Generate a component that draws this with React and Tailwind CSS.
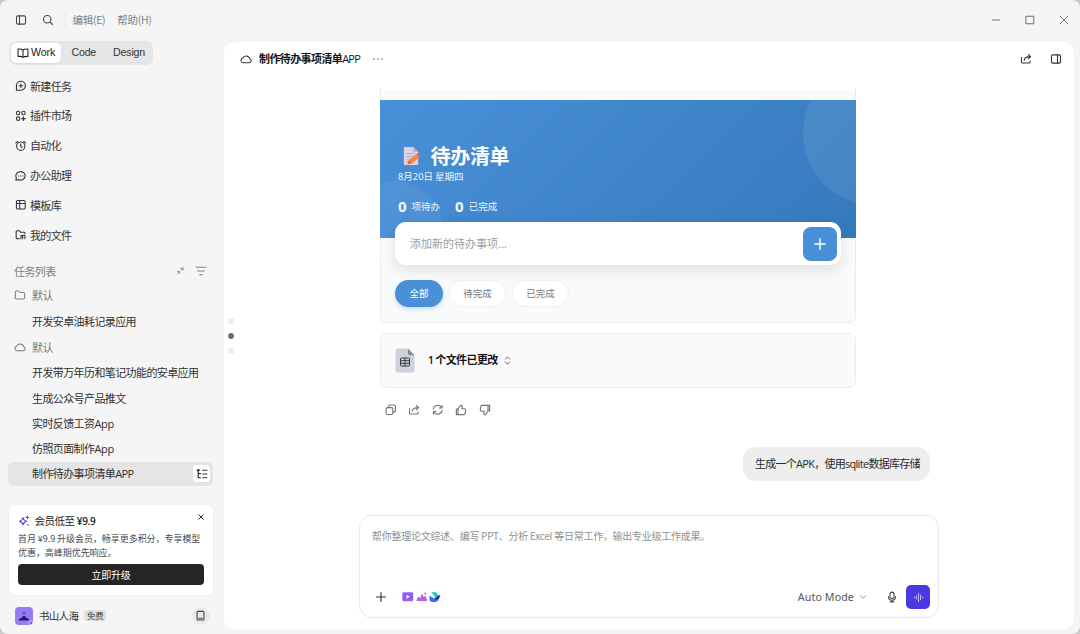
import React from "react";

function Icon({ children, className = "size-3", sw = 1.5, vb = "0 0 16 16" }) {
  return (
    <svg viewBox={vb} className={`shrink-0 ${className}`} fill="none" stroke="currentColor" strokeWidth={sw} strokeLinecap="round" strokeLinejoin="round">
      {children}
    </svg>
  );
}

const Cloud = ({ className }) => (
  <Icon className={className} sw={1.4}>
    <path d="M4.2 13h7.9a2.8 2.8 0 0 0 1-5.4A5.2 5.2 0 0 0 3.4 6.9 3.15 3.15 0 0 0 4.2 13Z" />
  </Icon>
);
const Share = ({ className }) => (
  <Icon className={className} sw={1.4}>
    <path d="M2 6v5.5A1.8 1.8 0 0 0 3.8 13.3h8.4a1.3 1.3 0 0 0 1.3-1.3v-1.2M5.6 9.8c.2-3.6 2.2-5 8.4-5M11.2 2l3 2.8-3 2.8" />
  </Icon>
);

const nav = [
  { label: "新建任务", icon: <path d="M2 14.2V8a6.2 6.2 0 1 1 6.2 6.2ZM8.2 5.5v5M5.7 8h5" /> },
  {
    label: "插件市场",
    icon: (
      <>
        <circle cx="4.3" cy="4.2" r="2.4" />
        <circle cx="11.8" cy="4.2" r="2.4" />
        <circle cx="4.3" cy="12" r="2.4" />
        <path d="M11.8 9.4v5.2M9.2 12h5.2" />
      </>
    ),
  },
  {
    label: "自动化",
    icon: (
      <>
        <circle cx="8" cy="8.6" r="5.8" />
        <path d="M8 5.5v3.4l1.9 1.5M1.2 4 3.7 1.8M14.8 4l-2.5-2.2" />
      </>
    ),
  },
  { label: "办公助理", icon: <path d="M1.2 14.200 2 11A6.500 5.900 0 1 1 4.500 13.300ZM5 8.200h.1M8 8.200h.1M11 8.200h.1" /> },
  { label: "模板库", icon: <path d="M4 2h8.2a2 2 0 0 1 2 2v8a2 2 0 0 1-2 2H4a2 2 0 0 1-2-2V4a2 2 0 0 1 2-2ZM2 6.2h12.2M6.5 2v12" /> },
  { label: "我的文件", icon: <path d="M6 13.5H3.2A1.6 1.6 0 0 1 1.6 12V4a1.5 1.5 0 0 1 1.5-1.5h3L7.8 4.6h4.6A1.5 1.5 0 0 1 14 6.1M8.3 13.5V9.2h2.4v4.3M13.8 13.5V8.6h-3.1" /> },
];

function Group({ icon, className }) {
  return (
    <div className={`flex items-center pl-[14px] text-[#777] ${className}`}>
      {icon}
      <span className="ml-[6px]">默认</span>
    </div>
  );
}

function Sidebar() {
  return (
    <aside className="flex w-[224px] shrink-0 flex-col">
      <div className="ml-[9px] flex h-6 w-[144px] items-center rounded-[7px] bg-[#e6e6e6] font-['Liberation_Sans'] text-[10.6px] text-[#333]">
        <div className="ml-[2px] flex h-5 w-[50px] items-center rounded-[5px] bg-white pl-[6px] text-[#222] shadow-xs">
          <Icon className="size-[12px]" sw={1.4}>
            <path d="M8 4.2v9.6M8 4.2C7 3 5 2.6 1.4 2.7v9.8C5 12.4 7 12.7 8 13.8c1-1.1 3-1.4 6.6-1.3V2.7C11 2.6 9 3 8 4.2Z" />
          </Icon>
          <span className="ml-[2px] tracking-[-0.100px]">Work</span>
        </div>
        <span className="ml-[10.500px] tracking-[-0.200px]">Code</span>
        <span className="ml-[17px] tracking-[-0.150px]">Design</span>
      </div>

      <nav className="mt-[6px] text-[11px] tracking-[-0.65px] text-[#333]">
        {nav.map((n) => (
          <div key={n.label} className="flex h-[29.8px] items-center pl-[14.5px]">
            <Icon className="size-[11.5px]" sw={1.5}>{n.icon}</Icon>
            <span className="ml-[4px]">{n.label}</span>
          </div>
        ))}
      </nav>

      <div className="mt-[9px] text-[11px] tracking-[-0.6px] text-[#303030]">
        <div className="flex h-6 items-center pl-[14px] text-[#7c7c7c]">
          <span className="w-[162px]">任务列表</span>
          <Icon className="size-[9px]" sw={1.4}>
            <path d="M14 2 9.8 6.2M9.5 2.5v4h4M2 14l4.2-4.2M2.5 9.5h4v4" />
          </Icon>
          <Icon className="ml-[10px] size-[12px]" sw={1.3}>
            <path d="M1.5 3h13M3.5 8h9M6.2 13h3.6" />
          </Icon>
        </div>
        <Group className="h-[25px]" icon={<Icon className="size-[12px]" sw={1.3}><path d="M1.8 12V4a1.3 1.3 0 0 1 1.3-1.3h3L7.6 4.5h5.3a1.3 1.3 0 0 1 1.3 1.3V12a1.3 1.3 0 0 1-1.3 1.3H3.1A1.3 1.3 0 0 1 1.8 12Z" /></Icon>} />
        <div className="flex h-[26px] items-center pl-8">开发安卓油耗记录应用</div>
        <Group className="h-[26px]" icon={<Cloud className="size-[12px]" />} />
        <div className="flex h-[25px] items-center pl-8">开发带万年历和笔记功能的安卓应用</div>
        <div className="flex h-[26px] items-center pl-8">生成公众号产品推文</div>
        <div className="flex h-[25px] items-center pl-8"><span>实时反馈工资<span className="font-['Open_Sans'] tracking-[-0.300px]">App</span></span></div>
        <div className="flex h-[26px] items-center pl-8"><span>仿照页面制作<span className="font-['Open_Sans'] tracking-[-0.300px]">App</span></span></div>
        <div className="ml-[8px] flex h-[24px] w-[205px] items-center rounded-[6px] bg-[#e5e5e5] pb-px pl-6 pr-[3px]">
          <span>制作待办事项清单<span className="font-['Open_Sans'] tracking-[-0.700px]">APP</span></span>
          <span className="ml-auto mt-px flex size-[17px] items-center justify-center rounded-[4px] bg-white">
            <Icon className="size-[12px]" sw={1.6}>
              <path d="M3 2v11h3M1.5 3.2 3 1.8l1.5 1.4M3 7.5h3M9 3h5.5M9 8h5.500M9 13h5.5" />
            </Icon>
          </span>
        </div>
      </div>

      <div className="ml-[9px] mt-[19px] h-[90px] w-[204px] rounded-[5px] bg-white pl-[9px] pr-[9px] pt-[9px] shadow-[0_0_2px_rgba(0,0,0,0.08)]">
        <div className="flex h-[15px] items-center text-[10.5px] tracking-[-0.5px] text-[#222]">
          <Icon className="size-[12px] text-[#5743e0]" sw={1.4}>
            <path d="M6.7 3.5c.6 3 1.7 4.100 4.700 4.900-3 .8-4.100 1.900-4.700 4.900-.6-3-1.700-4.100-4.700-4.900 3-.8 4.100-1.900 4.700-4.900ZM12.500 1.500v3.600M10.700 3.300h3.600M13.300 12.200v1.600" />
          </Icon>
          <span className="ml-[4.500px]">会员低至 <b className="ml-[0.500px] font-['Open_Sans'] text-[10px] font-semibold tracking-[-0.350px]">¥9.9</b></span>
          <Icon className="mb-[9px] ml-auto mr-[0.500px] size-[6px]" sw={2.500}><path d="M2 2l12 12M14 2 2 14" /></Icon>
        </div>
        <p className="mt-[3px] whitespace-nowrap text-[9px] leading-[14px] tracking-[-0.05px] text-[#4a4a4a]">
          首月 ¥9.9 升级会员，畅享更多积分，专享模型
          <br />
          优惠，高峰期优先响应。
        </p>
        <div className="mt-[4.500px] flex h-[21px] items-center justify-center rounded-[4px] bg-[#252525] pb-px text-[10px] tracking-[-0.300px] text-white">立即升级</div>
      </div>

      <div className="mt-[11px] flex h-5 items-center pl-[15px]">
        <svg viewBox="0 0 18 18" className="size-[18px]">
          <rect width="18" height="18" rx="4" fill="#957df2" />
          <circle cx="9" cy="6" r="1.800" fill="#7058cf" />
          <path d="M4 13.500v-1.500l3-1.500 1-1.500h2l1 1.500 3 1.500v1.500Z" fill="#2d1c6e" />
          <circle cx="15.800" cy="15.800" r="2" fill="#4c6fff" stroke="#f5f5f5" strokeWidth=".7" />
        </svg>
        <span className="ml-[6px] text-[10.500px] tracking-[-0.700px] text-[#333]">书山人海</span>
        <span className="ml-[6px] flex h-[11px] w-[22px] items-center justify-center rounded-[3px] bg-[#e0e0e0] text-[8.500px] tracking-[-0.300px] text-[#444]">免费</span>
        <span className="ml-[85.500px] flex size-[18px] items-center justify-center rounded-full bg-[#e9e9e9] text-[#444]">
          <Icon className="size-[11px]" sw={1.600}><rect x="3" y="2" width="10" height="12.500" rx="1.500" /><path d="M5.500 12h5" /></Icon>
        </span>
      </div>
    </aside>
  );
}

function TitleBar() {
  return (
    <header className="flex h-[41px] shrink-0 items-center pb-px pl-[15px] text-[#444]">
      <Icon className="size-[12px]" sw={1.400}><rect x="2" y="2.500" width="12" height="11" rx="1.800" /><path d="M6 2.500v11" /></Icon>
      <Icon className="ml-[15px] size-[12px]" sw={1.500}><circle cx="7" cy="7" r="5" /><path d="m10.800 10.800 3.200 3.200" /></Icon>
      <div className="ml-[11px] h-[16px] w-px bg-[#e7e7e7]" />
      <span className="ml-[6.500px] text-[10.500px] tracking-[-0.300px] text-[#808080]">编辑(E)</span>
      <span className="ml-[12px] text-[10.500px] tracking-[-0.300px] text-[#808080]">帮助(H)</span>
      <div className="ml-auto flex items-center pr-[11.500px] text-[#666]">
        <Icon className="size-[10px]" sw={1.400}><path d="M2 8h12" /></Icon>
        <Icon className="ml-[24px] size-[10px]" sw={1.500}><path d="M2 2h12v12H2Z" /></Icon>
        <Icon className="ml-[24px] size-[10px]" sw={1.400}><path d="m2 2 12 12M14 2 2 14" /></Icon>
      </div>
    </header>
  );
}

function NoteGlyph() {
  return (
    <svg viewBox="0 0 20 22" className="size-[21px] shrink-0">
      <path d="M2 1h10l5 5v14H2Z" fill="#d9d3e6" />
      <path d="M12 1v5h5Z" fill="#b5a9cb" />
      <path d="M4.500 8h9M4.500 11h9M4.500 14h6M4.500 17h4" stroke="#b2a8c4" strokeWidth=".9" />
      <path d="m7.300 15 7.500-6.100 2.900 3.400-7.600 6-4.100.9Z" fill="#ff822d" />
      <path d="m14.800 8.900 1.300-1.100c.9-.6 3.600 2.100 2.800 2.900l-1.200 1.100Z" fill="#f4586d" />
      <path d="m7.300 15 2.800 3.300-4.100.9Z" fill="#e76035" />
    </svg>
  );
}

function TodoPreview() {
  return (
    <section className="h-[235px] rounded-b-[7px] border-x border-b border-[#ececec] bg-[#f9fafb]">
      <div className="h-[12px] border-t-2 border-white bg-[#fafafa]" />
      <div className="relative -mx-px h-[138px] overflow-hidden bg-[linear-gradient(135deg,#4a90d9_0%,#357abd_100%)] pl-[18px] pt-[44.500px] text-white">
        <div className="absolute left-[423px] top-[-39px] size-[144px] rounded-full bg-white/8" />
        <div className="absolute left-[-38px] top-[81px] size-[102px] rounded-full bg-white/5" />
        <div className="relative flex h-[23px] items-center pl-[3px]">
          <NoteGlyph />
          <span className="ml-[8.500px] pb-px text-[20px] font-bold tracking-[-0.300px]">待办清单</span>
        </div>
        <div className="relative flex h-[18px] items-center text-[9.500px] text-white/90">
          <span><span className="font-['Noto_Sans'] text-[9.300px]">8</span>月<span className="font-['Noto_Sans'] text-[9.300px]">20</span>日 星期四</span>
        </div>
        <div className="relative mt-[12px] flex h-[18px] items-center text-[9.500px] text-white/90">
          <b className="font-['Noto_Sans'] text-[15px]">0</b>
          <span className="ml-[5px]">项待办</span>
          <b className="ml-[15px] font-['Noto_Sans'] text-[15px]">0</b>
          <span className="ml-[5px]">已完成</span>
        </div>
      </div>
      <div className="relative ml-[14px] mt-[-16px] flex h-[43px] w-[446px] items-center rounded-[11px] bg-white pl-[15px] pr-[4.500px] text-[11px] text-[#999ea5] shadow-[0_5px_15px_rgba(0,0,0,0.11)]">
        添加新的待办事项...
        <span className="ml-auto flex size-[34px] items-center justify-center rounded-[8px] bg-[#4a90d9] text-white">
          <Icon className="size-[14px]" sw={1.700}><path d="M8 2v12M2 8h12" /></Icon>
        </span>
      </div>
      <div className="ml-[14px] mt-[15px] flex gap-[6px] text-[9.500px] text-[#757b82]">
        <span className="flex h-[27px] w-[48px] items-center justify-center rounded-full bg-[#4a90d9] text-white shadow-[0_2px_4px_rgba(74,144,217,0.3)]">全部</span>
        <span className="flex h-[27px] w-[57px] items-center justify-center rounded-full border border-[#f0f1f2] bg-white">待完成</span>
        <span className="flex h-[27px] w-[57px] items-center justify-center rounded-full border border-[#f0f1f2] bg-white">已完成</span>
      </div>
    </section>
  );
}

function ChangedFiles() {
  return (
    <section className="mt-[10px] flex h-[55px] items-center rounded-[7px] border border-[#ececec] bg-[#fafafa] pb-px pl-[14px]">
      <svg viewBox="0 0 20 25" className="h-[25px] w-[20px]" fill="none">
        <path d="M3 .5h10l6.500 6.500v15a2.500 2.500 0 0 1-2.500 2.500H3A2.500 2.500 0 0 1 .5 22V3A2.500 2.500 0 0 1 3 .5Z" fill="#ccd2dc" />
        <path d="M13 .8v4.700A1.500 1.500 0 0 0 14.500 7H19.300Z" fill="#858b94" />
        <path d="M6.500 10h7a1 1 0 0 1 1 1v6a1 1 0 0 1-1 1h-7a1 1 0 0 1-1-1v-6a1 1 0 0 1 1-1ZM5.500 12.700h9M5.500 15.300h9M10 10v8.500" stroke="#343a44" strokeWidth="1" />
      </svg>
      <span className="ml-[13px] text-[11px] font-semibold tracking-[-0.600px] text-[#151515]"><span className="font-['Open_Sans'] text-[10.500px]">1</span> 个文件已更改</span>
      <Icon className="ml-[5px] size-[9px] text-[#555]" sw={1.600}><path d="m4 5.500 4-4 4 4M4 10.500l4 4 4-4" /></Icon>
    </section>
  );
}

function Actions() {
  return (
    <div className="mt-[15.500px] flex h-[12px] items-center gap-[11.800px] pl-[5px] text-[#727272]">
      <Icon className="size-[11.500px]"><rect x="1.500" y="5" width="9.500" height="9.500" rx="2" /><path d="M5 5V3.300a1.800 1.800 0 0 1 1.800-1.800h5.900a1.800 1.800 0 0 1 1.800 1.800v5.900a1.800 1.800 0 0 1-1.800 1.800H11" /></Icon>
      <Share className="size-[12px]" />
      <Icon className="size-[11.500px]"><path d="M1.800 7A6.300 6.300 0 0 1 13 4.300L14 5.500M14 2v3.500h-3.500M14.200 9A6.300 6.300 0 0 1 3 11.700L2 10.500M2 14v-3.500h3.500" /></Icon>
      <Icon className="size-[12px]"><path d="M1.800 6.800H4v7.400H1.800ZM4 7l3.300-5.300c1.900 0 2.700 1.200 2.200 2.800L9 6.400h3.600a1.700 1.700 0 0 1 1.700 2l-.9 4.400a1.800 1.800 0 0 1-1.800 1.400H4" /></Icon>
      <Icon className="size-[12px]"><path d="M14.200 9.200H12V1.800h2.200ZM12 9l-3.300 5.300c-1.900 0-2.700-1.200-2.200-2.800L7 9.600H3.400a1.700 1.700 0 0 1-1.700-2l.9-4.400a1.800 1.800 0 0 1 1.800-1.400H12" /></Icon>
    </div>
  );
}

function Composer() {
  return (
    <section className="ml-[135px] mt-[34px] flex h-[103px] w-[580px] flex-col rounded-[13px] border border-[#e9e9e9] bg-white">
      <div className="ml-[12px] mt-[10.500px] text-[10px] leading-[18px] tracking-[-0.260px] text-[#909090]">
        帮你整理论文综述、编写 PPT、分析 Excel 等日常工作，输出专业级工作成果。
      </div>
      <div className="mb-[8px] mt-auto flex h-6 items-center pl-[15px] pr-[8px] text-[#333]">
        <Icon className="size-[12px]" sw={1.500}><path d="M8 2v12M2 8h12" /></Icon>
        <div className="ml-[12px] flex h-[16px] w-[46px] items-center gap-[2px] rounded-full pl-[3px] shadow-[0_0_2px_rgba(0,0,0,0.05)]">
          <svg viewBox="0 0 12 12" className="size-[11.500px] shrink-0"><rect x=".3" y="1.300" width="11.400" height="9.400" rx="1.500" fill="#955cf4" /><path d="m4.800 4 3.200 2-3.200 2Z" fill="#fff" /></svg>
          <svg viewBox="0 0 12 12" className="size-[11.500px] shrink-0"><path d="M.5 10.500c.6-2.800 1.400-4.500 2.300-4.500.8 0 1.100 1.300 1.500 1.300.7 0 1-4.300 2-4.300.9 0 1.200 3.200 1.900 3.200.5 0 .7-.9 1.300-.9.9 0 1.600 2.500 2.200 5.200Z" fill="#b565dc" /><circle cx="9.800" cy="2.700" r="1.200" fill="#c273dd" /></svg>
          <svg viewBox="0 0 12 12" className="size-[12px] shrink-0"><path d="M2 1.200h5c1 .9 1.600 2 1.800 3.300L6.500 6.800C5.500 4.300 4 2.700 2 1.200Z" fill="#12cdb5" /><path d="M.5 4.200c2 2 4 3.200 6.200 3.100L9.500 9C7.200 12 2.500 11.800.5 9.500Z" fill="#3770f4" /><path d="M5.500 7.200c1.300-.2 2-1.500 3-2.400.9-.8 2-.7 3-.3-1 1.200-1.200 3.500-2.500 4.200-1.100.5-2.500-.3-3.500-1.500Z" fill="#133b98" /></svg>
        </div>
        <span className="ml-auto font-['Noto_Sans'] text-[10.700px] tracking-[0.100px] text-[#555]">Auto Mode</span>
        <Icon className="ml-[4.500px] size-[8px] text-[#777]" sw={1.600}><path d="m3 5.500 5 5 5-5" /></Icon>
        <Icon className="ml-[19px] size-[12px] text-[#444]" sw={1.400}><rect x="5.300" y="1.500" width="5.400" height="8.500" rx="2.700" /><path d="M3.300 7.500a4.700 4.700 0 0 0 9.400 0M8 12.500v2M5.500 14.500h5" /></Icon>
        <span className="ml-[8.500px] flex size-[24px] items-center justify-center rounded-[5px] bg-[#4c38df] text-[#e4deff]">
          <Icon className="size-[11px]" sw={1.200}><path d="M2 7.500v1M5 5.500v5M8 2v12M11 4.500v7M14 7.500v1" /></Icon>
        </span>
      </div>
    </section>
  );
}

export default function App() {
  return (
    <div className="h-[634px] w-[1080px] overflow-hidden bg-[#c9c9c9] font-['Noto_Sans_CJK_SC',sans-serif]">
      <div className="flex h-full flex-col rounded-[8px] bg-[#f5f5f5]">
        <TitleBar />
        <div className="flex min-h-0 flex-1">
          <Sidebar />
          <main className="mt-px flex h-[587px] w-[850px] flex-col rounded-[10px] bg-white">
            <div className="flex h-[35px] items-center pb-px pl-[16px] pr-[12.500px] text-[#333]">
              <Cloud className="size-[12px]" />
              <span className="ml-[7px] text-[11px] font-semibold tracking-[-0.600px] text-[#151515]">制作待办事项清单<span className="font-['Open_Sans'] font-medium tracking-[-0.800px]">APP</span></span>
              <Icon className="ml-[12px] size-[12px] text-[#666]" sw={2}><path d="M2.500 8h.1M8 8h.1M13.500 8h.1" /></Icon>
              <Share className="ml-auto size-[12px]" />
              <Icon className="ml-[18px] size-[12px]" sw={1.500}><rect x="2" y="2.500" width="12" height="11" rx="1.800" /><path d="M10 2.500v11" /></Icon>
            </div>
            <div className="mt-[11px] flex h-[328px]">
              <div className="flex w-[14px] flex-col items-center gap-[9px] pt-[230px]">
                <i className="size-[6px] rounded-full bg-[#ebebeb]" />
                <i className="size-[6px] rounded-full bg-[#707070]" />
                <i className="size-[6px] rounded-full bg-[#ebebeb]" />
              </div>
              <div className="ml-[142px] w-[476px]">
                <TodoPreview />
                <ChangedFiles />
                <Actions />
              </div>
            </div>
            <div className="ml-[519px] mt-[31px] flex h-[34px] w-[187px] shrink-0 items-center whitespace-nowrap rounded-[13px] bg-[#eeeeee] pb-px pl-[12px] text-[11px] tracking-[-0.750px] text-[#2a2a2a]">
              <span>生成一个<span className="font-['Open_Sans'] tracking-[-0.700px]">APK</span>，使用<span className="font-['Open_Sans'] tracking-[-0.700px]">sqlite</span>数据库存储</span>
            </div>
            <Composer />
          </main>
        </div>
      </div>
    </div>
  );
}
